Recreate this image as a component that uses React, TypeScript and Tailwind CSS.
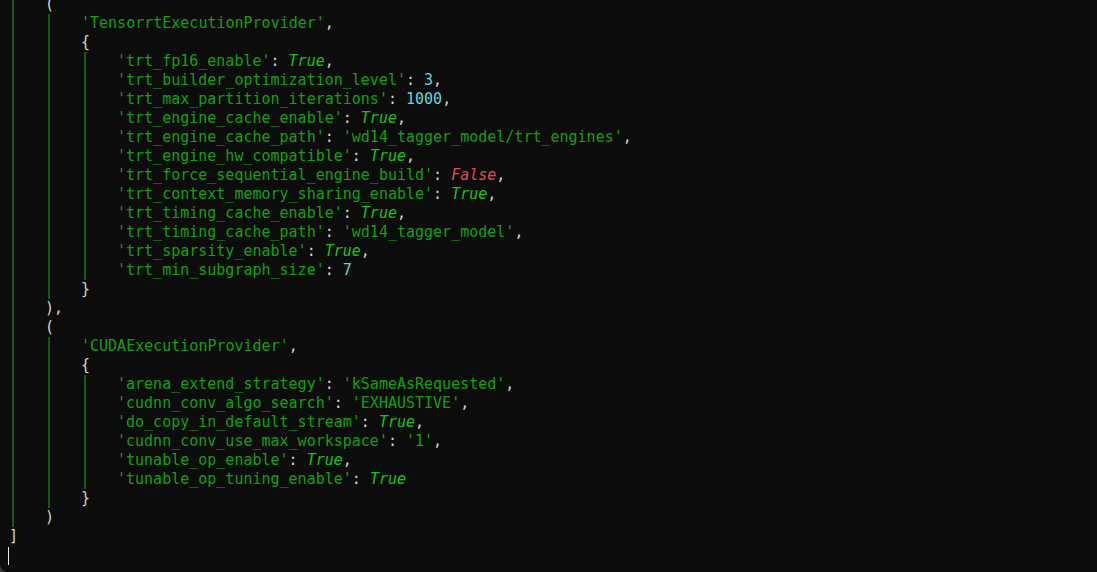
type Tok = [string, string];

// p = punctuation, s = string, k = True, f = False, n = number
const P = (t: string): Tok => ["p", t];
const S = (t: string): Tok => ["s", t];
const K = (t: string): Tok => ["k", t];
const F = (t: string): Tok => ["f", t];
const N = (t: string): Tok => ["n", t];

const entry = (key: string, val: Tok, last = false): Tok[] =>
  last ? [S(`'${key}'`), P(": "), val] : [S(`'${key}'`), P(": "), val, P(",")];

const lines: { indent: number; toks: Tok[] }[] = [
  { indent: 1, toks: [P("(")] },
  { indent: 2, toks: [S("'TensorrtExecutionProvider'"), P(",")] },
  { indent: 2, toks: [P("{")] },
  { indent: 3, toks: entry("trt_fp16_enable", K("True")) },
  { indent: 3, toks: entry("trt_builder_optimization_level", N("3")) },
  { indent: 3, toks: entry("trt_max_partition_iterations", N("1000")) },
  { indent: 3, toks: entry("trt_engine_cache_enable", K("True")) },
  { indent: 3, toks: entry("trt_engine_cache_path", S("'wd14_tagger_model/trt_engines'")) },
  { indent: 3, toks: entry("trt_engine_hw_compatible", K("True")) },
  { indent: 3, toks: entry("trt_force_sequential_engine_build", F("False")) },
  { indent: 3, toks: entry("trt_context_memory_sharing_enable", K("True")) },
  { indent: 3, toks: entry("trt_timing_cache_enable", K("True")) },
  { indent: 3, toks: entry("trt_timing_cache_path", S("'wd14_tagger_model'")) },
  { indent: 3, toks: entry("trt_sparsity_enable", K("True")) },
  { indent: 3, toks: entry("trt_min_subgraph_size", N("7"), true) },
  { indent: 2, toks: [P("}")] },
  { indent: 1, toks: [P("),")] },
  { indent: 1, toks: [P("(")] },
  { indent: 2, toks: [S("'CUDAExecutionProvider'"), P(",")] },
  { indent: 2, toks: [P("{")] },
  { indent: 3, toks: entry("arena_extend_strategy", S("'kSameAsRequested'")) },
  { indent: 3, toks: entry("cudnn_conv_algo_search", S("'EXHAUSTIVE'")) },
  { indent: 3, toks: entry("do_copy_in_default_stream", K("True")) },
  { indent: 3, toks: entry("cudnn_conv_use_max_workspace", S("'1'")) },
  { indent: 3, toks: entry("tunable_op_enable", K("True")) },
  { indent: 3, toks: entry("tunable_op_tuning_enable", K("True"), true) },
  { indent: 2, toks: [P("}")] },
  { indent: 1, toks: [P(")")] },
  { indent: 0, toks: [P("]")] },
];

const tokClass: Record<string, string> = {
  p: "text-[#d4d4d4]",
  s: "text-[#13a10e]",
  k: "text-[#16c60c] italic",
  f: "text-[#e74856] italic",
  n: "text-[#61d6d6]",
};

function Line({ indent, toks }: { indent: number; toks: Tok[] }) {
  // a line indented by n levels opens with n guide columns, 4 chars each
  const guides = Array.from({ length: indent });
  return (
    <div className="flex h-[19px] pl-[9px] whitespace-pre">
      {guides.map((_, i) => (
        <span key={i} className="flex h-full w-[36px] shrink-0 pl-[3px]">
          <span className="h-full border-l-2 border-[#0c600c]" />
        </span>
      ))}
      {toks.map(([kind, text], i) => (
        <span key={i} className={tokClass[kind]}>
          {text}
        </span>
      ))}
    </div>
  );
}

export default function App() {
  return (
    <div className="h-[572px] w-full overflow-hidden bg-[#3a3a3a]">
      <div
        className="h-full w-full overflow-hidden rounded-bl-[8px] bg-[#0c0c0c] text-[15px] leading-[19px]"
        style={{ fontFamily: '"DejaVu Sans Mono", "Liberation Mono", monospace' }}
      >
        <div className="-mt-[5px]">
          {lines.map((l, i) => (
            <Line key={i} indent={l.indent} toks={l.toks} />
          ))}
          <div className="flex h-[19px] items-center pl-[8px]">
            <span className="h-[18px] w-px bg-[#e6e6e6]" />
          </div>
        </div>
      </div>
    </div>
  );
}
